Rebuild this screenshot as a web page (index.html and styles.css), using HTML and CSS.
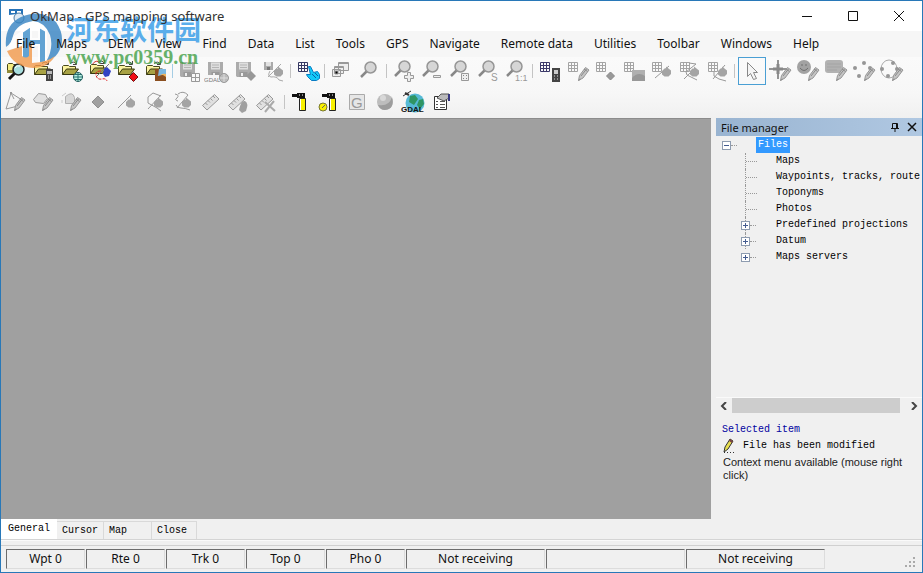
FILE: index.html
```html
<!DOCTYPE html>
<html lang="en">
<head>
<meta charset="utf-8">
<title>OkMap - GPS mapping software</title>
<link rel="stylesheet" href="styles.css">
</head>
<body>
<svg class="sprite" aria-hidden="true">
  <defs>
    <g id="folder">
      <path d="M4.500 17.500V9.500l1-1h5l1 1h6v3" fill="#fbf3a0" stroke="#4a4a20"/>
      <path d="M4.500 17.500l4-5.500h12l-4 5.500z" fill="#a8a244" stroke="#38380f"/>
      <path d="M12 6.500q4-3 6 .5M18.500 4v3.500h-3.500" fill="none" stroke="#444"/>
    </g>
    <g id="grid">
      <path d="M4.500 5.500h9v9h-9z" fill="#fafafa" stroke="currentColor"/>
      <path d="M4.500 8.500h9M4.500 11.500h9M7.500 5v10M10.500 5v10" fill="none" stroke="currentColor"/>
    </g>
    <g id="pencil">
      <path d="M14.500 23.500l1-5 6-8 3.500 2.500-6 8z" fill="#c4c4c4" stroke="#969696"/>
      <path d="M17 19l5.500-7M14.500 23.500l2-1.500M20 12l3.500 2.500" stroke="#8a8a8a" fill="none"/>
    </g>
    <g id="floppy">
      <path d="M4 5h15v15h-14l-1-1z" fill="#acacac"/>
      <path d="M7 5.500h9v7h-9z" fill="#dedede"/>
      <path d="M8 8h7M8 10.500h7" stroke="#b4b4b4"/>
      <path d="M7.500 15h8v5h-8z" fill="#999"/>
      <path d="M9 16h2v3h-2z" fill="#eee"/>
    </g>
    <g id="blob">
      <path d="M14 17.500l0-3.500 2.500-2.500 1.500 0v-2l5 4v3.500l-2.500 2.500h-4z" fill="#a4a4a4"/>
    </g>
    <g id="lens">
      <path d="M11 14l-6 6" stroke="#888" stroke-width="2.500"/>
      <circle cx="14.500" cy="10.500" r="5.500" fill="#d6d6d6" stroke="#969696" stroke-width="1.500"/>
    </g>
    <g id="ruler">
      <path d="M4.500 17.500l12-11 4.500 4.500-12 11z" fill="#e0e0e0" stroke="#999"/>
      <path d="M7.500 15l2 2M10 12.500l2 2M12.500 10.500l2 2M15 8l2 2" stroke="#999"/>
    </g>
    <g id="torch">
      <path d="M4 6h6v3h-6zM9 5h8v5h-8z" fill="#111"/>
      <path d="M11 7h1M14 7h1" stroke="#fff"/>
      <path d="M11.500 10.500h6v12h-6z" fill="#f8f000" stroke="#222"/>
      <path d="M12.500 11v11" stroke="#fff"/>
    </g>
  </defs>
</svg>

<div class="window">
  <header class="titlebar">
    <svg class="app-icon" viewBox="0 0 16 16" aria-hidden="true"><path d="M0 1h14v7l-6-2-8 1z" fill="#2673b8"/><path d="M2 3h4v2h-4zM8 3h4v2h-4z" fill="#fff"/><circle cx="10" cy="10" r="5" fill="#dce9f4" stroke="#4e7da6"/></svg>
    <h1>OkMap - GPS mapping software</h1>
    <div class="window-buttons">
      <button aria-label="Minimize"><svg viewBox="0 0 12 12"><path d="M1 6.500h10"/></svg></button>
      <button aria-label="Maximize"><svg viewBox="0 0 12 12"><path d="M1.500 1.500h9v9h-9z"/></svg></button>
      <button aria-label="Close window"><svg viewBox="0 0 12 12"><path d="M1 1l10 10M11 1L1 11"/></svg></button>
    </div>
  </header>

  <nav class="menubar">
    <button>File</button><button>Maps</button><button>DEM</button><button>View</button><button>Find</button><button>Data</button><button>List</button><button>Tools</button><button>GPS</button><button>Navigate</button><button>Remote data</button><button>Utilities</button><button>Toolbar</button><button>Windows</button><button>Help</button>
  </nav>

  <div class="toolbars">
    <div class="toolbar" role="toolbar" aria-label="Main">
      <button aria-label="Find file"><svg viewBox="0 0 28 28"><path d="M5.500 14.500v-7l1-1h4l1 1h6v3" fill="#f5eb80" stroke="#44441a"/><path d="M5 13h8v3h-8z" fill="#8f8938"/><path d="M13 16l-6 6" stroke="#111" stroke-width="3"/><circle cx="16.500" cy="12.500" r="5.500" fill="#a8dede" stroke="#222" stroke-width="1.500"/><path d="M13 11q2-3 5-2" fill="none" stroke="#fff"/></svg></button>
      <button aria-label="Open map"><svg viewBox="0 0 28 28"><use href="#folder"/><path d="M16 12h7v12h-7z" fill="#444"/><path d="M17 14h5v3h-5z" fill="#bbb"/><path d="M18 19h1M20 19h1M18 21h1M20 21h1" stroke="#ddd"/></svg></button>
      <button aria-label="Open web map"><svg viewBox="0 0 28 28"><use href="#folder"/><circle cx="20" cy="20" r="4.500" fill="#baf2e4" stroke="#205858"/><path d="M15.500 20h9M20 15.500v9M16.500 17.500h7M16.500 22.500h7" stroke="#287070"/></svg></button>
      <button aria-label="Open data"><svg viewBox="0 0 28 28"><path d="M6 8q4-7 9-1" fill="none" stroke="#c33"/><use href="#folder" y="-1"/><path d="M10 20l13-13" stroke="#777"/><path d="M17 17l1-5 3-2 4 4-2 5-4 1z" fill="#3243c4"/><path d="M15 14q-6 0-5 4 1 5 6 4 4-1 5 2" fill="none" stroke="#d22" stroke-dasharray="3 1"/></svg></button>
      <button aria-label="Open waypoint"><svg viewBox="0 0 28 28"><use href="#folder"/><path d="M19.500 15.500l4.500 4.500-4.500 4.500-4.500-4.500z" fill="#f01018" stroke="#701010"/></svg></button>
      <button aria-label="Open photo"><svg viewBox="0 0 28 28"><use href="#folder"/><path d="M13 12h11v12h-11z" fill="#8b4f20"/><path d="M17 12h7v5l-8 2z" fill="#7bb8e2"/><path d="M13 20q6-5 11 0v-3q-5-1-11 3z" fill="#f0b45c"/></svg></button>
      <i class="separator blue"></i>
      <button aria-label="Save map"><svg viewBox="0 0 28 28"><use href="#floppy"/><path d="M15.500 16.500h8v8h-8zM15.500 20.500h8M19.500 16.500v8" fill="#f8f8f8" stroke="#999"/></svg></button>
      <button aria-label="Save GDAL"><svg viewBox="0 0 28 28"><use href="#floppy"/><path d="M1 18h14v8h-14z" fill="#f7f7f7"/><text x="0" y="25" class="tiny">GDAL</text><circle cx="20" cy="21" r="4.500" fill="#bbb" stroke="#999"/><path d="M16 21h8M20 17v8" stroke="#ddd"/></svg></button>
      <button aria-label="Save waypoint"><svg viewBox="0 0 28 28"><use href="#floppy"/><path d="M19 14l5 5-5 5-5-5z" fill="#989898"/></svg></button>
      <button aria-label="Save data"><svg viewBox="0 0 28 28"><path d="M4 5h9v8h-9z" fill="#aaa"/><path d="M6 5h5v4h-5z" fill="#e2e2e2"/><path d="M7 10h3v3h-3z" fill="#777"/><path d="M8 20l13-13M10 14q-3 5 1 6 6-1 8 3l4 1" fill="none" stroke="#aaa"/><use href="#blob"/></svg></button>
      <i class="separator"></i>
      <button aria-label="Select list"><svg viewBox="0 0 28 28"><g color="#363863"><use href="#grid"/></g><path d="M14.500 9.500l2 0 3 6 4-1 2 3v4l-3 2h-5l-4-4-1-2 4 0z" fill="#12c9f8" stroke="#087ac3"/><path d="M18 17l4 4M21 16l3 3" stroke="#0860aa"/></svg></button>
      <i class="separator"></i>
      <button aria-label="Cascade"><svg viewBox="0 0 28 28"><path d="M10.500 5.500h10v8h-10zM6.500 9.500h9v7h-9zM4.500 12.500h8v7h-8z" fill="#eee" stroke="#999"/><path d="M10.500 6.500h10M6.500 10.500h9M7 14h3v3h-3z" stroke="#999"/></svg></button>
      <button aria-label="Search"><svg viewBox="0 0 28 28"><use href="#lens"/></svg></button>
      <i class="separator"></i>
      <button aria-label="Zoom in"><svg viewBox="0 0 28 28"><use href="#lens" y="-1"/><path d="M17.500 15.500h3v3h3v3h-3v3h-3v-3h-3v-3h3z" fill="#eee" stroke="#999"/></svg></button>
      <button aria-label="Zoom out"><svg viewBox="0 0 28 28"><use href="#lens" y="-1"/><path d="M15.500 18.500h7v2h-7z" fill="#eee" stroke="#999"/></svg></button>
      <button aria-label="Zoom to fit"><svg viewBox="0 0 28 28"><use href="#lens" y="-1"/><path d="M15.500 16.500h7v7h-7z" fill="#eee" stroke="#999"/><path d="M17 18h1v1h-1zM20 18h1v1h-1zM17 21h1v1h-1zM20 21h1v1h-1z" fill="#888"/></svg></button>
      <button aria-label="Zoom to selection"><svg viewBox="0 0 28 28"><use href="#lens" y="-1"/><text x="17" y="24" class="label">S</text></svg></button>
      <button aria-label="Zoom to actual size"><svg viewBox="0 0 28 28"><use href="#lens" y="-1"/><text x="13" y="24" class="ratio">1:1</text></svg></button>
      <i class="separator"></i>
      <button aria-label="Map table"><svg viewBox="0 0 28 28"><g color="#3c3a6a"><use href="#grid"/></g><path d="M16 11h8v14h-8z" fill="#444"/><path d="M18 13h4v4h-4z" fill="#ccc"/><path d="M18 19h1M21 19h1M18 22h1M21 22h1" stroke="#ddd"/></svg></button>
      <button aria-label="Edit table"><svg viewBox="0 0 28 28"><use href="#grid"/><use href="#pencil"/></svg></button>
      <button aria-label="Waypoint table"><svg viewBox="0 0 28 28"><use href="#grid"/><path d="M18.500 15l4 4-4 4-4-4z" fill="#999" stroke="#888"/></svg></button>
      <button aria-label="Photo table"><svg viewBox="0 0 28 28"><use href="#grid"/><path d="M12 13h13v11h-13z" fill="#b0b0b0"/><path d="M12 21q6-7 13-2v5h-13z" fill="#989898"/></svg></button>
      <button aria-label="Line table"><svg viewBox="0 0 28 28"><use href="#grid"/><path d="M7 21l14-12" stroke="#999"/><use href="#blob"/></svg></button>
      <button aria-label="Route table"><svg viewBox="0 0 28 28"><use href="#grid"/><path d="M8 22l11-11M13 6l7 1-10 8 1 3 10 5" fill="none" stroke="#999"/><use href="#blob"/></svg></button>
      <button aria-label="Track table"><svg viewBox="0 0 28 28"><use href="#grid"/><path d="M9 22l12-14M10 15v4l5 3 7 2" fill="none" stroke="#999"/><use href="#blob"/></svg></button>
      <i class="separator"></i>
      <button class="selected" aria-label="Pointer" aria-pressed="true"><svg viewBox="0 0 28 28"><path d="M9.500 5.500v14l3-3 3 6 3-1-3-6h4z" fill="#f4f4f4" stroke="#888"/></svg></button>
      <button aria-label="Draw point"><svg viewBox="0 0 28 28"><path d="M12 3v19M3 12h19" stroke="#939393" stroke-width="2"/><path d="M12 7v10M7 12h10" stroke="#888" stroke-width="3"/><use href="#pencil"/></svg></button>
      <button aria-label="Draw icon"><svg viewBox="0 0 28 28"><circle cx="10" cy="10" r="7" fill="#a2a2a2"/><path d="M8 7v2M12 7v2M6 11q4 5 8 0" fill="none" stroke="#707070"/><use href="#pencil"/></svg></button>
      <button aria-label="Draw comment"><svg viewBox="0 0 28 28"><rect x="3" y="3" width="18" height="13" rx="3" fill="#b2b2b2"/><path d="M5 7h14M5 10h14M5 13h10" stroke="#a4a4a4"/><use href="#pencil"/></svg></button>
      <button aria-label="Draw points"><svg viewBox="0 0 28 28"><g fill="#969696"><circle cx="5" cy="11" r="2"/><circle cx="14" cy="6" r="2"/><circle cx="20" cy="11" r="2"/><circle cx="9" cy="19" r="2"/></g><use href="#pencil"/></svg></button>
      <button aria-label="Edit points"><svg viewBox="0 0 28 28"><ellipse cx="11" cy="12" rx="8" ry="9" fill="none" stroke="#aaa"/><g fill="#969696"><circle cx="4" cy="12" r="2"/><circle cx="15" cy="6" r="2"/><circle cx="19" cy="12" r="2"/><circle cx="10" cy="19" r="2"/></g><use href="#pencil"/></svg></button>
    </div>

    <div class="toolbar" role="toolbar" aria-label="Drawing">
      <button aria-label="Draw track"><svg viewBox="0 0 28 28"><path d="M9 5l11 7M9 5l-5 16 12-3M9 5l3 6" fill="none" stroke="#999"/><path d="M8 4h2v2h-2z" fill="#999"/><use href="#pencil" x="-2" y="-1"/></svg></button>
      <button aria-label="Draw area"><svg viewBox="0 0 28 28"><path d="M3.500 11.500l5-6 7 1 2 4-4 5-8-1z" fill="#e1e1e1" stroke="#999"/><use href="#pencil" x="-2" y="-1"/></svg></button>
      <button aria-label="Draw sector"><svg viewBox="0 0 28 28"><path d="M7.500 8.500q7-6 9 1v6h-9z" fill="#d8d8d8" stroke="#b1b1b1"/><path d="M4 8l4-3M4 12v3" stroke="#ccc"/><use href="#pencil" x="-2" y="-1"/></svg></button>
      <button aria-label="New waypoint"><svg viewBox="0 0 28 28"><path d="M12 8l6 6-6 6-6-6z" fill="#a0a0a0" stroke="#909090"/></svg></button>
      <button aria-label="New line"><svg viewBox="0 0 28 28"><path d="M4 20l13-13" stroke="#999"/><use href="#blob" x="-2"/></svg></button>
      <button aria-label="New route"><svg viewBox="0 0 28 28"><path d="M6 21l13-14M11 5l8 3M11 5l-5 4v6l9 5 4 3" fill="none" stroke="#999"/><use href="#blob" x="-2"/></svg></button>
      <button aria-label="New track"><svg viewBox="0 0 28 28"><path d="M5 6q5 1 2 4-3 2 1 3M7 20l11-13M8 6q5-4 10 1M6 17q1 3 5 3t9 2" fill="none" stroke="#999"/><use href="#blob" x="-2"/></svg></button>
      <button aria-label="Measure"><svg viewBox="0 0 28 28"><use href="#ruler"/></svg></button>
      <button aria-label="Move measure"><svg viewBox="0 0 28 28"><use href="#ruler" x="-2"/><path d="M13 22q2-10 6-9 4 2 1 10l-4 2z" fill="#a0a0a0"/></svg></button>
      <button aria-label="Clear measure"><svg viewBox="0 0 28 28"><use href="#ruler" x="-2"/><path d="M11 14l10 9M20 13l-9 11" stroke="#aaa" stroke-width="2"/></svg></button>
      <i class="separator"></i>
      <button aria-label="GPS connect"><svg viewBox="0 0 28 28"><use href="#torch"/></svg></button>
      <button aria-label="GPS time"><svg viewBox="0 0 28 28"><use href="#torch" x="2"/><circle cx="7" cy="19" r="4" fill="#f8f000" stroke="#777732"/><path d="M6 20l3-3" stroke="#666"/></svg></button>
      <button aria-label="Google Earth"><svg viewBox="0 0 28 28"><path d="M5.500 6.500h15v15h-15z" fill="#e6e6e6" stroke="#aaa"/><text x="7" y="20" class="big-g">G</text></svg></button>
      <button aria-label="Globe"><svg viewBox="0 0 28 28"><circle cx="13" cy="14" r="8" fill="#bdbdbd"/><path d="M6 17q11 2 14-8 3 12-7 13-5 0-7-5z" fill="#9c9c9c"/><circle cx="11" cy="10" r="3" fill="#d8d8d8"/></svg></button>
      <button aria-label="GDAL"><svg viewBox="0 0 28 28"><circle cx="15" cy="15" r="9.500" fill="#56b9d5"/><path d="M10 8l5-1 3 4-4 6-5-3zM19 12l4-1 1 5-4 5-3-4z" fill="#2f9563"/><path d="M3 8l8-5" stroke="#333"/><path d="M5 5l4 2" stroke="#333" stroke-width="2"/><text x="1" y="24" class="gdal">GDAL</text></svg></button>
      <button aria-label="Properties"><svg viewBox="0 0 28 28"><path d="M6.500 8.500h12v13h-12z" fill="#fff" stroke="#333"/><path d="M8 13.500h2M12 13.500h5M8 16.500h2M12 16.500h5M8 19.500h2M12 19.500h5" stroke="#555"/><path d="M9 10l4-4h8v4l-5 3z" fill="#bbb" stroke="#555"/><path d="M20 6h2v7h-2z" fill="#383880"/></svg></button>
    </div>
  </div>

  <main class="workspace">
    <section class="map-canvas" aria-label="Map"></section>
    <aside class="panel">
      <header class="panel-head">
        <h2>File manager</h2>
        <button aria-label="Pin"><svg viewBox="0 0 10 10"><path d="M2.500 6V1.500h5V6M1 6.500h8M5 6.500V10M6.500 1v5"/></svg></button>
        <button aria-label="Close panel"><svg viewBox="0 0 10 10"><path d="M1 1l8 8M9 1L1 9" stroke-width="1.500"/></svg></button>
      </header>
      <div class="tree">
        <div class="root"><button class="toggle minus" aria-label="Collapse Files"></button><i class="stub short"></i><span class="current">Files</span></div>
        <ul>
          <li><span class="joint"><i class="stub"></i></span>Maps</li>
          <li><span class="joint"><i class="stub"></i></span>Waypoints, tracks, route</li>
          <li><span class="joint"><i class="stub"></i></span>Toponyms</li>
          <li><span class="joint"><i class="stub"></i></span>Photos</li>
          <li><span class="joint"><button class="toggle plus" aria-label="Expand Predefined projections"></button><i class="stub short"></i></span>Predefined projections</li>
          <li><span class="joint"><button class="toggle plus" aria-label="Expand Datum"></button><i class="stub short"></i></span>Datum</li>
          <li><span class="joint"><button class="toggle plus" aria-label="Expand Maps servers"></button><i class="stub short"></i></span>Maps servers</li>
        </ul>
      </div>
      <div class="scrollbar">
        <button aria-label="Scroll left"><svg viewBox="0 0 8 8"><path d="M6 0L2 4l4 4"/></svg></button>
        <div class="thumb"></div>
        <button aria-label="Scroll right"><svg viewBox="0 0 8 8"><path d="M2 0l4 4-4 4"/></svg></button>
      </div>
      <section class="info">
        <h3>Selected item</h3>
        <p class="modified"><svg viewBox="0 0 14 16" aria-hidden="true"><path d="M2 14l1-5 5-8 3 2-5 8z" fill="#e8e050" stroke="#333"/><path d="M7 3l3 2 1-2-3-2z" fill="#744"/><path d="M2 14.500h1M5 14.500h1M8 14.500h1M11 14.500h1" stroke="#333"/></svg>File has been modified</p>
        <p class="hint">Context menu available (mouse right click)</p>
      </section>
    </aside>
  </main>

  <div class="tabs" role="tablist">
    <button role="tab" aria-selected="true">General</button><button role="tab">Cursor</button><button role="tab" class="wide">Map</button><button role="tab">Close</button>
  </div>

  <footer class="statusbar">
    <span>Wpt 0</span><span>Rte 0</span><span>Trk 0</span><span>Top 0</span><span>Pho 0</span><span class="long">Not receiving</span><span class="long"></span><span class="long">Not receiving</span>
    <svg class="grip" viewBox="0 0 12 12" aria-hidden="true"><path d="M8 0h2v2h-2zM4 4h2v2h-2zM8 4h2v2h-2zM0 8h2v2h-2zM4 8h2v2h-2zM8 8h2v2h-2z" fill="#aaa"/></svg>
  </footer>

  <div class="watermark">
    <svg viewBox="0 0 60 60" aria-hidden="true">
      <path d="M2 37Q0 15 17 7 38-2 52 12 63 28 54 43 50 49 42 52 50 38 46 25 41 12 29 11 12 14 9 26 8 33 2 37z" fill="#3583c2"/>
      <path d="M9 27L26 15V34L3 40Q7 33 9 27z" fill="#fff"/>
      <path d="M18 22l9-6v13h8V17l7 4v31l-7 3V35h-8v21l-9-4z" fill="#3e8fcb" stroke="#fff" stroke-width="2"/>
      <path d="M3 41l15-5v10q4 3 7 0V35l3-2v20q16-1 23-7-7 12-22 12Q10 57 3 41z" fill="#f2994a"/>
    </svg>
    <div><b>河东软件园</b><span>www.pc0359.cn</span></div>
  </div>
</div>
</body>
</html>
```
FILE: styles.css
```css
* {
  box-sizing: border-box;
}

body {
  margin: 0;
  font: 12px/16px "Noto Sans", "Open Sans", sans-serif;
  color: #111;
}

button {
  margin: 0;
  padding: 0;
  border: 0;
  background: none;
  font: inherit;
  color: inherit;
}

h1, h2, h3, p, ul {
  margin: 0;
  padding: 0;
  font: inherit;
  list-style: none;
}

svg {
  display: block;
}

.sprite {
  position: absolute;
  width: 0;
  height: 0;
}

.window {
  position: relative;
  display: flex;
  flex-direction: column;
  height: 100vh;
  overflow: hidden;
  border: 1px solid #2878b8;
  background: #f0f0f0;
}

.titlebar {
  display: flex;
  align-items: center;
  flex: 0 0 30px;
  padding-left: 8px;
  background: #fff;
}

.titlebar h1 {
  z-index: 2;
  flex: 1;
  padding-left: 5px;
  font-size: 13px;
  color: #333;
}

.app-icon {
  width: 16px;
  height: 16px;
}

.window-buttons {
  display: flex;
}

.window-buttons button {
  display: grid;
  place-items: center;
  width: 46px;
  height: 30px;
}

.window-buttons svg {
  width: 12px;
  height: 12px;
  fill: none;
  stroke: #111;
}

.menubar {
  display: flex;
  flex: 0 0 26px;
  gap: 1px;
  padding-left: 5px;
  background: #f6f6f6;
}

.menubar button {
  z-index: 2;
  padding: 0 10px;
  white-space: nowrap;
}

.toolbars {
  display: flex;
  flex-direction: column;
  gap: 3px;
  padding: 0 1px 2px;
  background: linear-gradient(#fafafa, #f7f7f7 60%, #f0f0f0);
}

.toolbar {
  display: flex;
  align-items: center;
  height: 28px;
}

.toolbar button {
  flex: 0 0 28px;
  height: 28px;
  color: #a4a4a4;
}

.toolbar svg {
  width: 28px;
  height: 28px;
}

.toolbar .selected {
  outline: 1px solid #4a9fd4;
  outline-offset: -1px;
}

.separator {
  flex: 0 0 4px;
  height: 14px;
  margin-left: 2px;
  border-left: 1px solid #c4c4c4;
}

.separator.blue {
  border-color: #a5cde4;
}

.tiny, .label, .ratio, .big-g, .gdal {
  font-family: "Liberation Sans", sans-serif;
  fill: #999;
}

.tiny {
  font-size: 6px;
  fill: #777;
}

.label {
  font-size: 10px;
}

.ratio {
  font-size: 9px;
}

.big-g {
  font-size: 15px;
}

.gdal {
  font-size: 8px;
  font-weight: bold;
  fill: #111;
}

.workspace {
  display: grid;
  grid-template-columns: minmax(0, 1fr) 206px;
  gap: 5px;
  flex: 1;
  min-height: 0;
}

.map-canvas {
  background: #a0a0a0;
  border-top: 1px solid #8c8c8c;
}

.panel {
  display: flex;
  flex-direction: column;
  min-height: 0;
}

.panel-head {
  display: flex;
  align-items: center;
  flex: 0 0 18px;
  gap: 7px;
  padding: 0 5px;
  background: linear-gradient(90deg, #99b4d1, #b0c8e2);
}

.panel-head h2 {
  flex: 1;
  padding-top: 1px;
  font-size: 11px;
}

.panel-head svg {
  width: 10px;
  height: 10px;
  fill: none;
  stroke: #111;
}

.tree {
  flex: 1;
  padding-top: 1px;
  overflow: hidden;
  font: 10px/16px "Liberation Mono", monospace;
  color: #000;
  white-space: nowrap;
}

.root {
  display: flex;
  align-items: center;
  height: 16px;
  padding-left: 6px;
}

.current {
  margin-left: 19px;
  padding: 0 2px;
  background: #3399ff;
  color: #fff;
}

.tree ul {
  padding-left: 29px;
}

.tree li {
  display: flex;
  align-items: center;
  height: 16px;
  border-left: 1px dotted #999;
}

.tree li:last-child {
  border-color: transparent;
}

.joint {
  display: flex;
  align-items: center;
  flex: 0 0 30px;
}

.stub {
  width: 11px;
  border-top: 1px dotted #999;
}

.stub.short {
  width: 6px;
}

.toggle {
  width: 9px;
  height: 9px;
  border: 1px solid #8e9cb0;
  background: linear-gradient(#445c90, #445c90) center / 5px 1px no-repeat, #fff;
}

.plus {
  margin-left: -5px;
  background: linear-gradient(#445c90, #445c90) center / 5px 1px no-repeat, linear-gradient(#445c90, #445c90) center / 1px 5px no-repeat, #fff;
}

.scrollbar {
  display: flex;
  flex: 0 0 16px;
  border-top: 1px solid #fafafa;
}

.scrollbar button {
  display: grid;
  place-items: center;
  width: 16px;
}

.scrollbar svg {
  width: 8px;
  height: 8px;
  fill: none;
  stroke: #444;
  stroke-width: 2;
}

.thumb {
  flex: 1;
  margin-right: 6px;
  background: #cdcdcd;
}

.info {
  flex: 0 0 106px;
  padding: 9px 6px 0;
  font: 10px/16px "Liberation Mono", monospace;
  color: #000;
}

.info h3 {
  color: #0000a0;
}

.modified {
  display: flex;
  gap: 7px;
}

.modified svg {
  width: 14px;
  height: 16px;
}

.hint {
  padding: 2px 1px;
  font: 11px/13px "Liberation Sans", sans-serif;
  color: #222;
}

.tabs {
  display: flex;
  align-items: flex-end;
  flex: 0 0 21px;
  border-bottom: 1px solid #d4d4d4;
  font: 10px/16px "Liberation Mono", monospace;
  color: #000;
}

.tabs button {
  height: 18px;
  padding: 1px 5px 0;
  border: 1px solid #d9d9d9;
  border-width: 1px 1px 0 0;
  text-align: left;
}

.tabs button:last-child {
  padding-right: 9px;
}

.tabs [aria-selected="true"] {
  height: 20px;
  padding: 0 7px;
  border: 0;
  background: #fff;
}

.tabs .wide {
  width: 48px;
}

.statusbar {
  display: flex;
  gap: 1px;
  flex: 0 0 32px;
  padding: 9px 5px 3px;
  background: linear-gradient(#fafafa 1px, #f0f0f0 1px 5px, #d0d0d0 5px 6px, #f0f0f0 6px);
}

.statusbar span {
  flex: 0 0 79px;
  height: 20px;
  border: 1px solid #dcdcdc;
  border-top-color: #6c6c6c;
  border-left-color: #6c6c6c;
  text-align: center;
  line-height: 18px;
}

.statusbar .long {
  flex-basis: 139px;
}

.grip {
  width: 12px;
  height: 12px;
  margin: 8px 0 0 auto;
}

.watermark {
  position: absolute;
  z-index: 1;
  top: 9px;
  left: 3px;
  display: flex;
  gap: 2px;
  opacity: 0.8;
  pointer-events: none;
}

.watermark svg {
  width: 60px;
  height: 60px;
}

.watermark b {
  display: block;
  margin-top: 3px;
  font: 700 27px/32px "Noto Sans CJK SC", sans-serif;
  color: #329be8;
}

.watermark span {
  display: block;
  font: bold 20px/24px "Liberation Serif", serif;
  color: #43a047;
}
```
